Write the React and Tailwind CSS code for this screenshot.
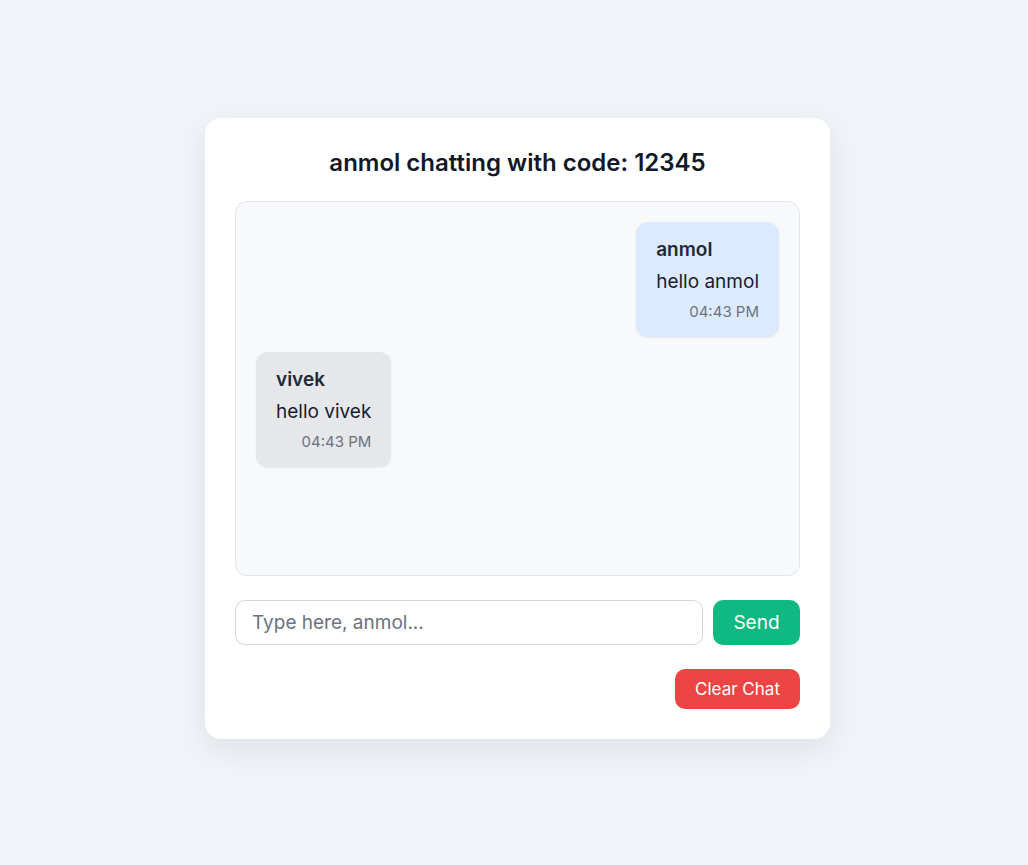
import { useState } from "react";

const messages = [
  { sender: "anmol", text: "hello anmol", time: "04:43 PM" },
  { sender: "vivek", text: "hello vivek", time: "04:43 PM" },
];

export default function App() {
  const [input, setInput] = useState("");
  const user = "anmol";

  return (
    <div className="min-h-screen flex items-center justify-center bg-[#f0f4f8] pl-[7px] pb-[8px] font-['Inter',sans-serif]">
      <div className="w-[625px] bg-white rounded-2xl p-[30px] shadow-[0_10px_30px_rgba(0,0,0,0.08)]">
        <h2 className="text-center text-[24px] leading-[30px] font-semibold text-[#111827] mb-[23px]">
          {user} chatting with code: 12345
        </h2>

        {/* Messages */}
        <div className="h-[375px] bg-[#f8f9fb] border border-[#e3e5e9] rounded-xl p-5 flex flex-col gap-[15px]">
          {messages.map((m, i) => (
            <div
              key={i}
              className={
                m.sender === user
                  ? "self-end bg-[#dbeafe] rounded-xl px-5 pt-[14px] pb-[15px] shadow-[0_1px_3px_rgba(0,0,0,0.06)]"
                  : "self-start bg-[#e5e7eb] rounded-xl px-5 pt-[14px] pb-[15px] shadow-[0_1px_3px_rgba(0,0,0,0.06)]"
              }
            >
              <div className="text-[19px] leading-[27px] font-semibold text-[#1f2937]">{m.sender}</div>
              <div className="text-[19px] leading-[27px] text-[#1a1a2e] mt-[5px]">{m.text}</div>
              <div className="text-[15px] leading-[21px] text-[#6b7280] text-right mt-[6px]">{m.time}</div>
            </div>
          ))}
        </div>

        {/* Input */}
        <div className="flex gap-[10px] mt-6">
          <input
            type="text"
            value={input}
            onChange={(e) => setInput(e.target.value)}
            placeholder={`Type here, ${user}...`}
            className="flex-1 h-[45px] border border-[#d1d5db] rounded-[10px] px-4 text-[19px] text-[#111827] placeholder:text-[#6b7280] outline-none"
          />
          <button className="w-[87px] h-[45px] pt-[2px] bg-[#10b981] text-white text-[19px] rounded-[10px]">
            Send
          </button>
        </div>

        <div className="flex justify-end mt-6">
          <button className="w-[125px] h-10 pt-[2px] bg-[#ef4444] text-white text-[17px] rounded-[10px]">
            Clear Chat
          </button>
        </div>
      </div>
    </div>
  );
}
